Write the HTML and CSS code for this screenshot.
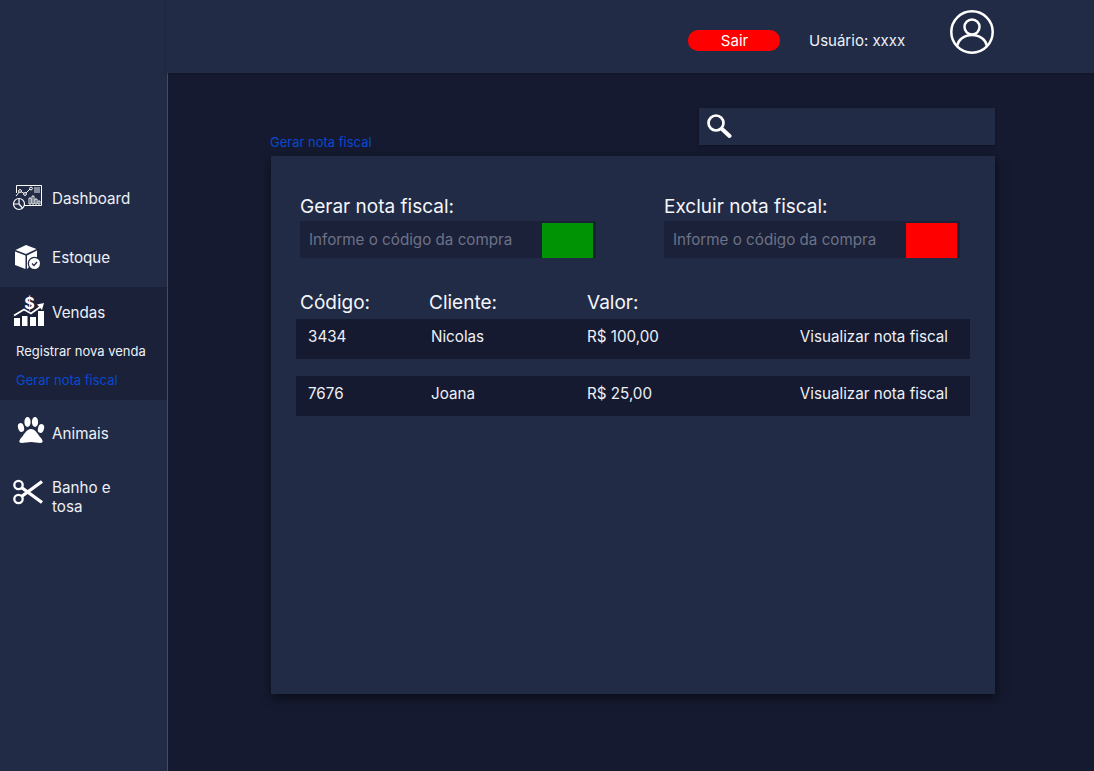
FILE: index.html
```html
<!DOCTYPE html>
<html lang="pt-BR">
<head>
    <meta charset="UTF-8">
    <meta name="viewport" content="width=device-width, initial-scale=1.0">
    <title>Gerar nota fiscal</title>
    <link rel="stylesheet" href="styles.css">
</head>
<body>
    <aside class="sidebar">
        <nav class="menu">
            <a class="menu-item item-dashboard">
                <svg class="menu-icon" viewBox="0 0 30 26" fill="none" stroke="#fff" stroke-width="1">
                    <path d="M3.500 8V.5h25v20H11"/>
                    <path d="M3 11l4-5 5 3 6-6"/>
                    <circle cx="7" cy="6" r="1.400" fill="#222b45"/><circle cx="12" cy="9" r="1.400" fill="#222b45"/><circle cx="18" cy="3.500" r="1.400" fill="#222b45"/>
                    <path d="M21 3h6M21 5h6M21 7h6" stroke-width=".9"/>
                    <path d="M16 19v-6h2v6zM19 19v-8h2v8zM22 19v-5h2v5zM25 19v-3h2v3z" stroke-width=".9"/>
                    <circle cx="6" cy="19" r="5.500" fill="#222b45" stroke-width="1.200"/>
                    <path d="M6 13.500V19H.5M6 19l3.500 4" stroke-width="1.200"/>
                </svg>
                <span>Dashboard</span>
            </a>
            <a class="menu-item item-estoque">
                <svg class="menu-icon" viewBox="0 0 30 26" fill="#fff">
                    <path d="M2.500 6L13 1l10.500 4L13 10z"/>
                    <path d="M2 7.500l10.500 4V25L2 21z"/>
                    <path d="M14 11.500l10-5V15l-10 10z"/>
                    <circle cx="21.500" cy="19.500" r="6.800" fill="#222b45"/>
                    <circle cx="21.500" cy="19.500" r="5.500"/>
                    <path d="M19 19.500l2 2 3-3.500" fill="none" stroke="#222b45" stroke-width="1.300"/>
                </svg>
                <span>Estoque</span>
            </a>
            <div class="menu-group">
                <a class="menu-item item-vendas">
                    <svg class="menu-icon icon-tall" viewBox="0 0 30 30" fill="#fff">
                        <path d="M0 30v-8h6v8zM8 30V20h5.500v10zM16 30v-9h6v9zM24 30V15h6v15z"/>
                        <path d="M0 19.500l10-6 7 4 9-6.500" fill="none" stroke="#fff" stroke-width="1.800"/>
                        <path d="M23 8.500l7-1.500-2 7z"/>
                        <text x="15.500" y="12.500" class="dollar">$</text>
                    </svg>
                    <span>Vendas</span>
                </a>
                <a class="sub-item">Registrar nova venda</a>
                <a class="sub-item sub-active">Gerar nota fiscal</a>
            </div>
            <a class="menu-item item-animais">
                <svg class="menu-icon" viewBox="0 0 30 26" fill="#fff">
                    <ellipse cx="8" cy="7.500" rx="3" ry="4.500" transform="rotate(-15 8 7.500)"/>
                    <ellipse cx="14.500" cy="2" rx="3.100" ry="5"/>
                    <ellipse cx="22" cy="2" rx="3.100" ry="5"/>
                    <ellipse cx="28" cy="8.500" rx="3" ry="4.500" transform="rotate(15 28 8.500)"/>
                    <path d="M18 9c4 0 6 4 9 8 3 3 4 6 0 6-2 0-6-1-9-1s-7 1-9 1c-4 0-3-3 0-6 3-4 5-8 9-8z"/>
                </svg>
                <span>Animais</span>
            </a>
            <a class="menu-item item-banho">
                <svg class="menu-icon" viewBox="0 0 30 26" fill="none" stroke="#fff">
                    <circle cx="5.500" cy="5" r="4.200" stroke-width="2.300"/>
                    <circle cx="5.500" cy="19" r="4.200" stroke-width="2.300"/>
                    <path d="M8.500 7.500L29 22.500M8.500 16.500L29 1.500" stroke-width="3.400"/>
                </svg>
                <span>Banho e<br>tosa</span>
            </a>
        </nav>
    </aside>
    <div class="content">
        <header class="topbar">
            <a class="logout">Sair</a>
            <span class="user-name">Usuário: xxxx</span>
            <svg class="user-icon" viewBox="0 0 44 44" fill="none" stroke="#fff" stroke-width="2.500">
                <circle cx="22" cy="22" r="20.700"/>
                <circle cx="22" cy="17" r="7.500"/>
                <path d="M7 36c1-6 7-11 15-11s14 5 15 11"/>
            </svg>
        </header>
        <main class="main">
            <div class="toolbar">
                <span class="crumb">Gerar nota fiscal</span>
                <div class="search">
                    <svg class="search-icon" viewBox="0 0 26 26" fill="none" stroke="#fff">
                        <circle cx="10" cy="10" r="7.500" stroke-width="2.700"/>
                        <path d="M16 16l7.500 7" stroke-width="4" stroke-linecap="round"/>
                    </svg>
                </div>
            </div>
            <section class="card">
                <div class="forms">
                    <div class="code-form">
                        <label class="form-title">Gerar nota fiscal:</label>
                        <div class="code-field">
                            <span class="placeholder">Informe o código da compra</span>
                            <button class="code-btn btn-green"></button>
                        </div>
                    </div>
                    <div class="code-form">
                        <label class="form-title">Excluir nota fiscal:</label>
                        <div class="code-field">
                            <span class="placeholder">Informe o código da compra</span>
                            <button class="code-btn btn-red"></button>
                        </div>
                    </div>
                </div>
                <div class="table-head">
                    <span class="col-code">Código:</span>
                    <span class="col-client">Cliente:</span>
                    <span class="col-value">Valor:</span>
                </div>
                <div class="table-row">
                    <span class="col-code">3434</span>
                    <span class="col-client">Nicolas</span>
                    <span class="col-value">R$ 100,00</span>
                    <a class="col-link">Visualizar nota fiscal</a>
                </div>
                <div class="table-row">
                    <span class="col-code">7676</span>
                    <span class="col-client">Joana</span>
                    <span class="col-value">R$ 25,00</span>
                    <a class="col-link">Visualizar nota fiscal</a>
                </div>
            </section>
        </main>
    </div>
</body>
</html>
```

FILE: styles.css
```css
* {
    box-sizing: border-box;
}
html, body {
    height: 100%;
}
body {
    margin: 0;
    display: flex;
    overflow: hidden;
    font-family: Inter, "Liberation Sans", sans-serif;
    color: #fff;
    background-color: #151a30;
}
.sidebar {
    width: 168px;
    flex-shrink: 0;
    padding-top: 175px;
    background-color: #222b45;
    border-right: 1px solid #434c66;
}
.menu {
    display: flex;
    flex-direction: column;
}
.menu-item {
    display: flex;
    align-items: center;
    gap: 9px;
    padding-left: 13px;
    font-size: 15.2px;
    line-height: 19px;
    color: #edf0f7;
}
.menu-icon {
    width: 30px;
    height: 26px;
    flex-shrink: 0;
    overflow: visible;
}
.icon-tall {
    height: 30px;
}
.dollar {
    font-size: 16px;
    font-weight: 700;
    text-anchor: middle;
}
.item-dashboard {
    height: 46px;
}
.item-estoque {
    height: 46px;
    margin-top: 13px;
}
.menu-group {
    margin-top: 7px;
    height: 113px;
    background-color: #1a2138;
}
.item-vendas {
    height: 48px;
    margin-bottom: 8px;
    padding-left: 14px;
    gap: 8px;
}
.item-vendas span {
    margin-top: 2px;
}
.sub-item {
    display: block;
    padding-left: 16px;
    font-size: 13px;
    line-height: 16px;
    margin-bottom: 13px;
    color: #edf0f7;
}
.sub-active {
    color: #0a48cf;
}
.item-animais {
    height: 26px;
    margin-top: 20px;
}
.item-banho {
    align-items: flex-start;
    margin-top: 33px;
    line-height: 18.5px;
}
.item-banho svg {
    margin-top: 1px;
}
.content {
    flex: 1;
    min-width: 0;
}
.topbar {
    height: 73px;
    margin-left: -2px;
    display: flex;
    align-items: center;
    padding: 0 0 8px 522px;
    background-color: #222b45;
    box-shadow: 0 1px 3px rgba(0, 0, 0, 0.22);
}
.logout {
    width: 92px;
    height: 21px;
    margin-top: 15px;
    padding-left: 1px;
    border-radius: 10px;
    text-align: center;
    font-size: 15px;
    line-height: 21px;
    background-color: #ff0000;
}
.user-name {
    margin: 15px 0 0 29px;
    font-size: 15px;
    white-space: nowrap;
    color: #edf0f7;
}
.user-icon {
    width: 44px;
    height: 44px;
    margin: -1px 0 0 45px;
}
.main {
    padding: 35px 99px 0 102px;
}
.toolbar {
    display: flex;
    justify-content: space-between;
    align-items: flex-end;
}
.crumb {
    font-size: 13px;
    line-height: 16px;
    margin-bottom: -5px;
    color: #0a48cf;
}
.search {
    width: 296px;
    height: 37px;
    display: flex;
    align-items: center;
    padding-left: 7px;
    background-color: #222b45;
    box-shadow: 0 1px 3px rgba(0, 0, 0, 0.25);
}
.search-icon {
    width: 26px;
    height: 26px;
    margin-bottom: 1px;
}
.card {
    height: 538px;
    margin: 11px 0 0 1px;
    padding: 38px 25px 0;
    background-color: #222b45;
    box-shadow: 1px 4px 10px rgba(0, 0, 0, 0.55);
}
.forms {
    display: flex;
    gap: 68px;
    padding-left: 4px;
}
.form-title {
    display: block;
    font-size: 19px;
    line-height: 25px;
    margin-bottom: 2px;
    color: #f4f6fb;
}
.code-field {
    width: 296px;
    height: 37px;
    display: flex;
    justify-content: space-between;
    align-items: flex-end;
    padding: 0 3px 0 9px;
    background-color: #1a2138;
}
.placeholder {
    align-self: center;
    font-size: 15.2px;
    color: #6d7287;
}
.code-btn {
    width: 51px;
    height: 35px;
    padding: 0;
    border: none;
}
.btn-green {
    background-color: #009304;
}
.btn-red {
    background-color: #ff0000;
}
.table-head {
    display: flex;
    height: 29px;
    margin-top: 32px;
    padding-left: 4px;
    font-size: 19px;
    line-height: 25px;
    color: #f4f6fb;
}
.table-head .col-code {
    width: 129px;
}
.table-head .col-client {
    width: 158px;
}
.table-row {
    display: flex;
    width: 674px;
    height: 40px;
    margin-bottom: 17px;
    padding: 8px 22px 0 12px;
    font-size: 15.2px;
    line-height: 20px;
    background-color: #151a30;
    color: #edf0f7;
}
.table-row .col-code {
    width: 123px;
}
.table-row .col-client {
    width: 156px;
}
.table-row .col-value {
    flex: 1;
}
```
